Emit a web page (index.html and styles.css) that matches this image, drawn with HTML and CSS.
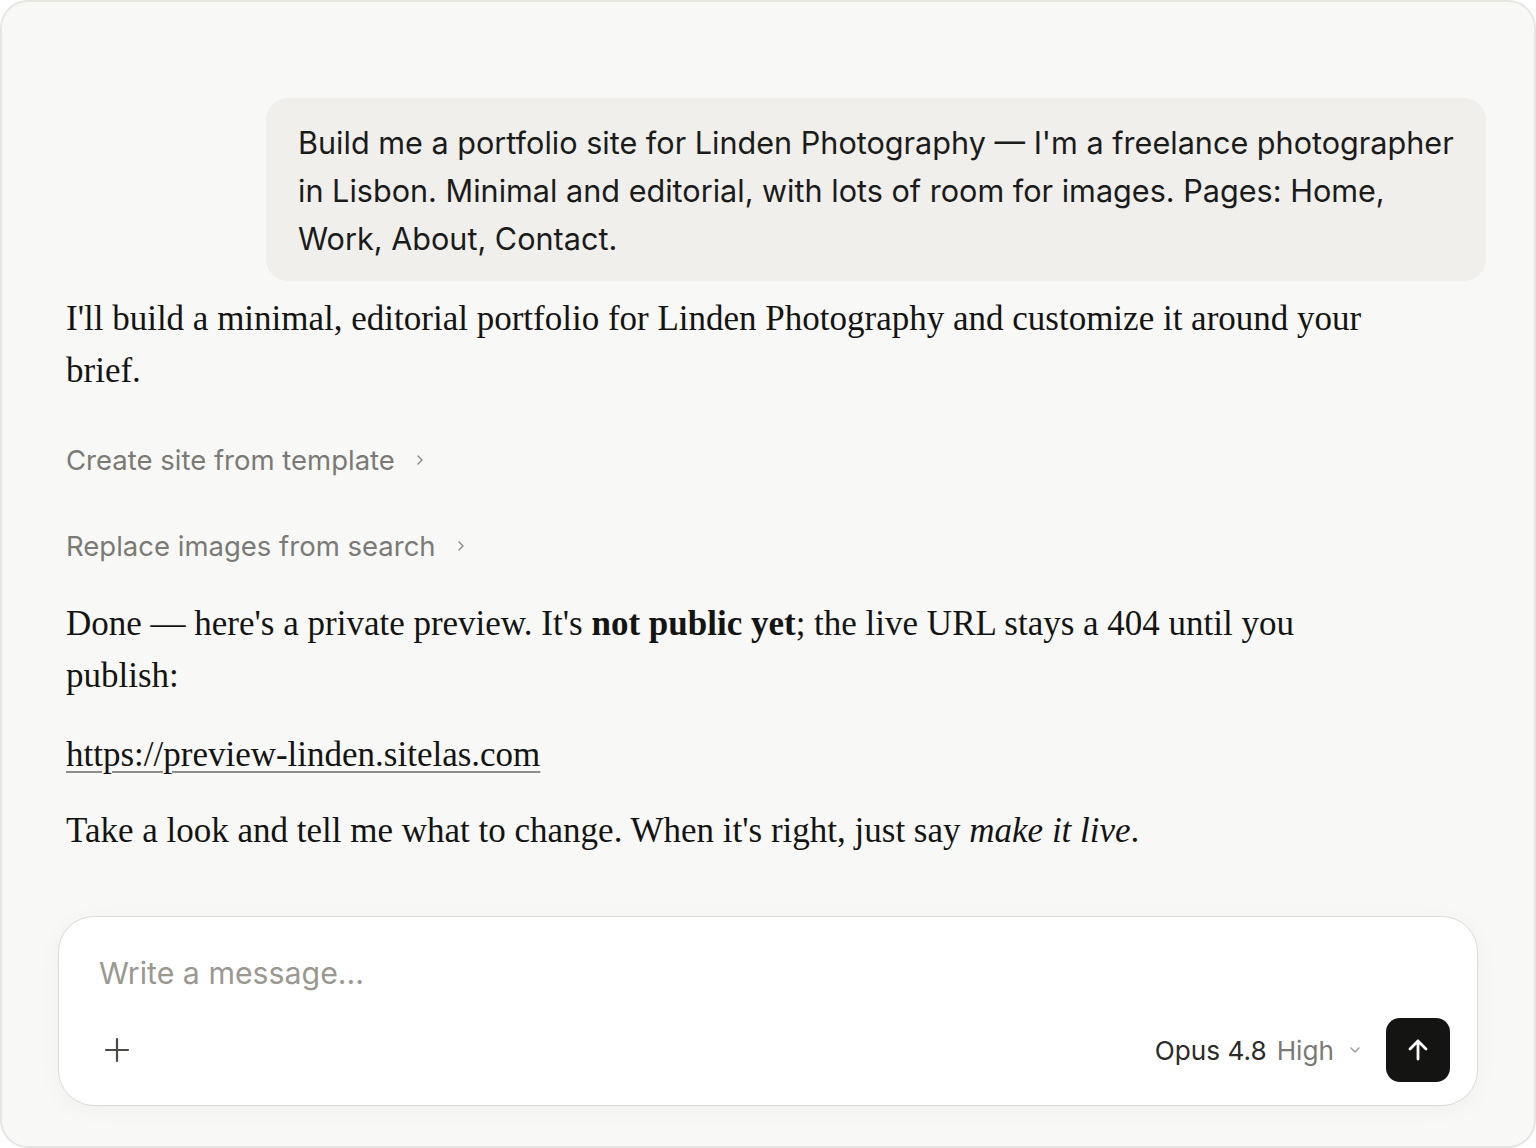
FILE: index.html
```html
<!DOCTYPE html>
<html lang="en">
<head>
  <meta charset="UTF-8" />
  <meta name="viewport" content="width=device-width, initial-scale=1.0"/>
  <title>Chat</title>
  <link rel="stylesheet" href="styles.css">
</head>
<body>
  <div class="frame">
    <div class="thread">
      <div class="user-row">
        <div class="bubble">Build me a portfolio site for Linden Photography — I'm a freelance photographer in Lisbon. Minimal and editorial, with lots of room for images. Pages: Home, Work, About, Contact.</div>
      </div>

      <div class="reply">
        <p class="first">I'll build a minimal, editorial portfolio for Linden Photography and customize it around your brief.</p>

        <div class="tool">
          <span>Create site from template</span>
          <svg class="chev" width="10" height="12" viewBox="0 0 10 12"><path d="M3 2l4 4-4 4" fill="none" stroke="#8a8984" stroke-width="1.4" stroke-linecap="round" stroke-linejoin="round"/></svg>
        </div>
        <div class="tool">
          <span>Replace images from search</span>
          <svg class="chev" width="10" height="12" viewBox="0 0 10 12"><path d="M3 2l4 4-4 4" fill="none" stroke="#8a8984" stroke-width="1.4" stroke-linecap="round" stroke-linejoin="round"/></svg>
        </div>

        <p class="done">Done — here's a private preview. It's <strong>not public yet</strong>; the live URL stays a 404 until you publish:</p>
        <p><a href="#">https://preview-linden.sitelas.com</a></p>
        <p>Take a look and tell me what to change. When it's right, just say <em>make it live</em>.</p>
      </div>
    </div>

    <div class="composer">
      <div class="placeholder">Write a message...</div>
      <div class="composer-bar">
        <svg class="plus" width="28" height="28" viewBox="0 0 28 28"><path d="M14 3v22M3 14h22" stroke="#4a4a47" stroke-width="2.2" stroke-linecap="round"/></svg>
        <div class="right">
          <div class="model">
            <span class="name">Opus 4.8</span>
            <span class="effort">High</span>
            <svg class="caret" width="14" height="10" viewBox="0 0 14 10"><path d="M3 3l4 4 4-4" fill="none" stroke="#9a9994" stroke-width="1.4" stroke-linecap="round" stroke-linejoin="round"/></svg>
          </div>
          <button class="send">
            <svg width="28" height="28" viewBox="0 0 28 28"><path d="M14 23V5M6 13l8-8 8 8" fill="none" stroke="#fff" stroke-width="2.8" stroke-linecap="round" stroke-linejoin="round"/></svg>
          </button>
        </div>
      </div>
    </div>
  </div>
</body>
</html>
```

FILE: styles.css
```css
html, body {
  margin: 0;
  background: #ffffff;
}

.frame {
  box-sizing: border-box;
  width: 1536px;
  height: 1148px;
  background: #f8f8f6;
  border: 2px solid #e7e6e1;
  border-radius: 28px;
  display: flex;
  flex-direction: column;
  justify-content: space-between;
  padding: 96px 48px 40px 56px;
}

.thread {
  padding-left: 8px;
}

.user-row {
  display: flex;
  justify-content: flex-end;
}

.bubble {
  width: 1164px;
  background: #f0efec;
  border-radius: 22px;
  padding: 21px 24px 18px 32px;
  font-family: Inter, "Noto Sans", sans-serif;
  font-size: 30.6px;
  line-height: 48px;
  color: #1b1b1a;
}

.reply {
  max-width: 1330px;
  margin-top: 12px;
  font-family: "Liberation Serif", "DejaVu Serif", serif;
  font-size: 35px;
  line-height: 52px;
  color: #141413;
}

.reply p {
  margin: 0 0 24px 0;
}

.reply p.first {
  margin-bottom: 20px;
}

.reply p.done {
  margin-bottom: 27px;
}

.reply a {
  color: #141413;
  text-decoration: underline;
  text-decoration-color: #8f8e8a;
  text-decoration-thickness: 1.5px;
  text-underline-offset: 5px;
}

.tool {
  height: 86px;
  display: flex;
  align-items: center;
  gap: 20px;
  font-family: Inter, "Noto Sans", sans-serif;
  font-size: 27.5px;
  color: #7b7a75;
}

.tool:last-of-type {
  margin-bottom: 9px;
}

.composer {
  width: 1420px;
  box-sizing: border-box;
  height: 190px;
  background: #ffffff;
  border: 1px solid #dcdbd6;
  border-radius: 36px;
  box-shadow: 0 4px 24px rgba(0, 0, 0, 0.035);
  padding: 38px 27px 23px 40px;
  display: flex;
  flex-direction: column;
  justify-content: space-between;
}

.placeholder {
  font-family: Inter, "Noto Sans", sans-serif;
  font-size: 30.3px;
  line-height: 36px;
  color: #9b988f;
}

.composer-bar {
  display: flex;
  align-items: center;
  justify-content: space-between;
}

.plus {
  margin-left: 4px;
}

.right {
  display: flex;
  align-items: center;
  gap: 24px;
}

.model {
  display: flex;
  align-items: center;
  gap: 10px;
  font-family: Inter, "Noto Sans", sans-serif;
  font-size: 26.2px;
}

.model .name {
  color: #2b2b29;
}

.model .effort {
  color: #7b7a75;
}

.model .caret {
  margin-left: 4px;
}

.send {
  width: 64px;
  height: 64px;
  border: none;
  border-radius: 14px;
  background: #141413;
  display: flex;
  align-items: center;
  justify-content: center;
  padding: 0;
  cursor: pointer;
}
```
